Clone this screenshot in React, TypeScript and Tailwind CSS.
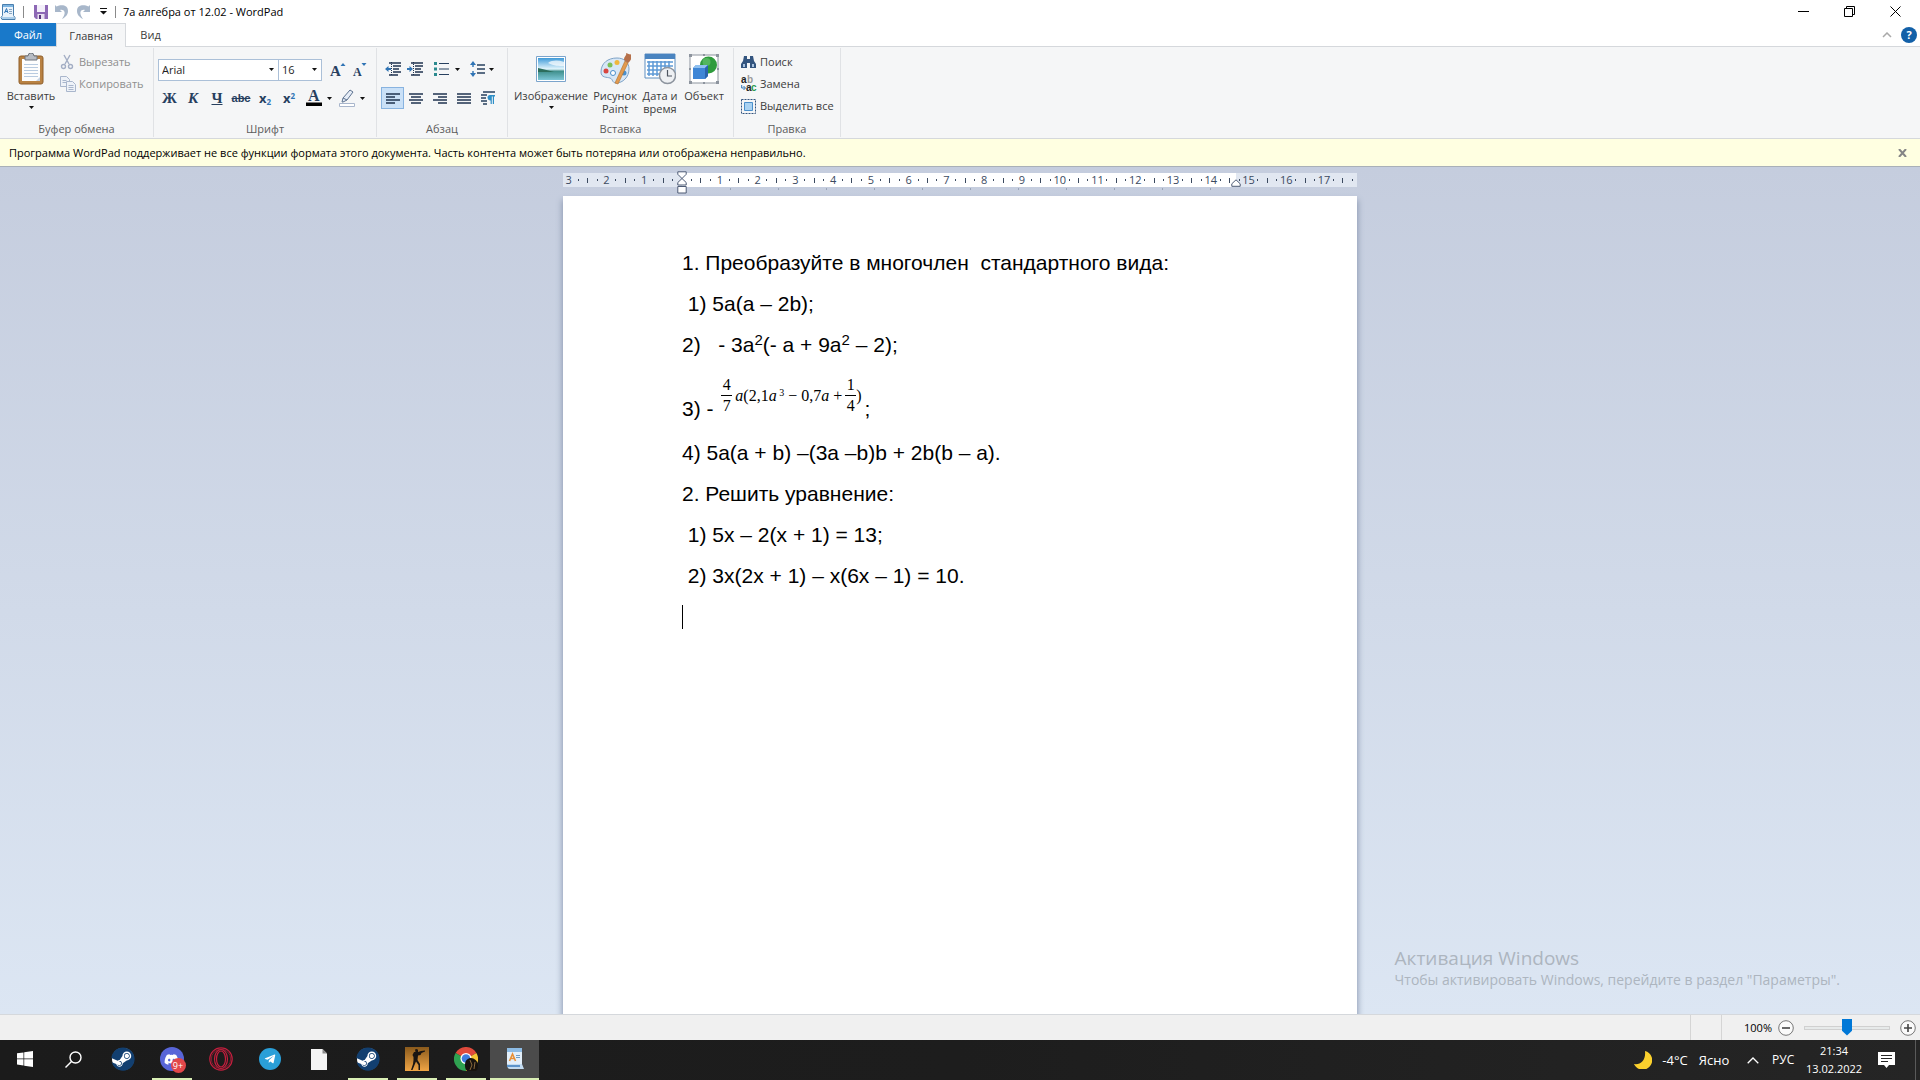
import type { ReactNode } from "react";
import { FaDiscord, FaSteam, FaTelegramPlane } from "react-icons/fa";

// WordPad window with the ribbon, ruler and document, above the Windows taskbar.

export default function App() {
  return (
    <div className="flex h-screen flex-col overflow-hidden bg-white font-['Open_Sans','Noto_Sans',sans-serif] text-[11px] leading-4 text-[#1e1e1e]">
      <TitleBar />
      <Tabs />
      <Ribbon />
      <Notice />
      <Workspace />
      <StatusBar />
      <Taskbar />
    </div>
  );
}

function TitleBar() {
  return (
    <header className="flex h-[23px] shrink-0 items-center justify-between pr-[2px]">
      <div className="flex h-full items-center">
        <svg viewBox="0 0 16 16" className="h-4 w-4">
          <path d="M2.500.5h11v11l1.500 2v2H2l-1-2 1.500-2z" fill="#eaf3fb" stroke="#4a7fae" />
          <path d="M3 1h10v2H3z" fill="#7db4e0" />
          <path d="M4.500 9L6.500 4.500 8 9M5 7.500h2.500" fill="none" stroke="#2f74b5" />
          <path d="M9 5.500h3M9 7.500h3M9 9.500h3" stroke="#8ba7c2" />
          <path d="M2 13h12v2H2z" fill="#a9cdea" />
        </svg>
        <span className="mr-[10px] ml-[7px] h-3 w-px bg-[#8a8a8a]" />
        <div className="flex items-center gap-[7px]">
          <button aria-label="Сохранить">
            <svg viewBox="0 0 14 14" className="h-[14px] w-[14px]">
              <path d="M0 0h14v14H2L0 12z" fill="#8d68b5" />
              <path d="M3 0h8v7H3z" fill="#f3effa" />
              <path d="M3.5 9h7v5h-7z" fill="#e8e0f0" />
              <path d="M5 10h2v4H5z" fill="#54357c" />
            </svg>
          </button>
          <button aria-label="Отменить">
            <UndoIcon />
          </button>
          <button aria-label="Вернуть" className="-scale-x-100">
            <UndoIcon />
          </button>
          <button aria-label="Настройка панели быстрого доступа" className="ml-[3px]">
            <svg viewBox="0 0 7 7" className="h-[7px] w-[7px]">
              <path d="M0 0h7v1H0zM0 3h7L3.500 6.500z" fill="#111" />
            </svg>
          </button>
        </div>
        <span className="mr-[7px] ml-2 h-3 w-px bg-[#8a8a8a]" />
        <h1 className="text-black">7а алгебра от 12.02 - WordPad</h1>
      </div>
      <div className="flex h-full items-center text-black">
        <button aria-label="Свернуть" className="flex w-[46px] justify-center">
          <svg viewBox="0 0 11 11" className="h-[11px] w-[11px]">
            <path d="M0 5.500h11" stroke="currentColor" />
          </svg>
        </button>
        <button aria-label="Свернуть в окно" className="flex w-[46px] justify-center">
          <svg viewBox="0 0 11 11" className="h-[11px] w-[11px]" fill="none" stroke="currentColor">
            <path d="M.5 2.500h8v8h-8zM2.500 2.500v-2h8v8h-2" />
          </svg>
        </button>
        <button aria-label="Закрыть" className="flex w-[46px] justify-center">
          <svg viewBox="0 0 11 11" className="h-[11px] w-[11px]" stroke="currentColor">
            <path d="M.5.5l10 10M10.500.5l-10 10" />
          </svg>
        </button>
      </div>
    </header>
  );
}

function Tabs() {
  return (
    <nav className="flex h-6 shrink-0 items-stretch border-b border-[#d5d8dc] text-[#3c3c3c]">
      <button className="w-14 bg-[#1979ca] text-white">Файл</button>
      <button className="-mb-px w-[70px] border-x border-t border-[#d5d8dc] bg-[#f5f6f7]">
        Главная
      </button>
      <button className="w-[49px]">Вид</button>
      <div className="ml-auto flex items-center gap-[9px] pr-[3px]">
        <button aria-label="Свернуть ленту">
          <svg viewBox="0 0 10 6" className="h-[6px] w-[10px]" fill="none" stroke="#a9a9a9" strokeWidth="1.500">
            <path d="M1 5l4-4 4 4" />
          </svg>
        </button>
        <button
          aria-label="Справка"
          className="flex h-4 w-4 items-center justify-center rounded-full bg-[#1260a8] font-bold text-white"
        >
          ?
        </button>
      </div>
    </nav>
  );
}

function Ribbon() {
  return (
    <section className="flex h-[91px] shrink-0 bg-[#f5f6f7]">
      <Group title="Буфер обмена" width="w-[154px]">
        <div className="flex pl-1">
          <BigButton label="Вставить" width="w-[54px]" menu>
            <PasteIcon />
          </BigButton>
          <div className="flex flex-col gap-[6px] pt-[6px] pl-[2px] text-[#8f8f8f]">
            <button className="flex items-center gap-[5px]">
              <svg viewBox="0 0 14 16" className="h-4 w-[14px]" fill="none" stroke="#a3aec4" strokeWidth="1.400">
                <path d="M4 1l5 9M10 1L5 10" />
                <circle cx="3.500" cy="12.500" r="2" />
                <circle cx="10.500" cy="12.500" r="2" />
              </svg>
              Вырезать
            </button>
            <button className="flex items-center gap-[3px]">
              <svg viewBox="0 0 16 16" className="h-4 w-4" fill="#eef2f8" stroke="#a9b6cc">
                <path d="M.5.5h6l3 3v7h-9zM2.500 4.500h4M2.500 6.500h4" />
                <path d="M6.500 5.500h6l3 3v7h-9zM8.500 9.500h5M8.500 11.500h5M8.500 13.500h5" />
              </svg>
              Копировать
            </button>
          </div>
        </div>
      </Group>
      <Group title="Шрифт" width="w-[223px]">
        <div className="flex flex-col gap-[6px] pt-[11px] pl-1">
          <div className="flex items-center">
            <Combo label="Семейство шрифтов" value="Arial" width="w-[121px]" />
            <Combo label="Размер шрифта" value="16" width="-ml-px w-[44px]" />
            <button aria-label="Увеличить размер" className="ml-2 flex w-[22px]">
              <svg viewBox="0 0 16 16" className="h-4 w-4 overflow-visible" fill="#27405f">
                <text x="0" y="14" fontSize="15" fontWeight="700" fontFamily="Liberation Serif">A</text>
                <path d="M10.500 4l2.500-3 2.500 3z" fill="#2f74b5" />
              </svg>
            </button>
            <button aria-label="Уменьшить размер" className="flex">
              <svg viewBox="0 0 16 16" className="h-4 w-4 overflow-visible" fill="#27405f">
                <text x="1" y="14" fontSize="12" fontWeight="700" fontFamily="Liberation Serif">A</text>
                <path d="M9.500 1l2.500 3 2.500-3z" fill="#2f74b5" />
              </svg>
            </button>
          </div>
          <div className="flex h-[22px] items-center font-['Liberation_Serif',serif] text-[15px] font-bold text-[#27405f]">
            <button className="w-[23px]">Ж</button>
            <button className="w-6 italic">К</button>
            <button className="w-6 underline">Ч</button>
            <button className="w-6 font-['Liberation_Sans',sans-serif] text-[11px] line-through">abc</button>
            <button className="w-6 font-['Open_Sans',sans-serif] text-[13px]">
              x<sub className="text-[8px] text-[#2f74b5]">2</sub>
            </button>
            <button className="w-6 font-['Open_Sans',sans-serif] text-[13px]">
              x<sup className="text-[8px] text-[#2f74b5]">2</sup>
            </button>
            <button aria-label="Цвет текста" className="ml-[5px] flex w-8 items-center gap-[5px]">
              <svg viewBox="0 0 16 18" className="h-[18px] w-4 overflow-visible" fill="#27405f">
                <text x="2" y="12" fontSize="16" fontWeight="700" fontFamily="Liberation Serif">A</text>
                <path d="M0 13.500h16V17H0z" fill="#000" />
              </svg>
              <Arrow />
            </button>
            <button aria-label="Цвет выделения текста" className="ml-px flex items-center gap-[5px]">
              <svg viewBox="0 0 16 18" className="h-[18px] w-4">
                <path d="M.5 14.500h15v3H.5z" fill="#fff" stroke="#a9b6cc" />
                <path d="M3 13l1-4 7-8 3 2-6 8-4 2z" fill="#e6edf7" stroke="#5d7290" />
                <path d="M4 9l4 2" stroke="#5d7290" />
              </svg>
              <Arrow />
            </button>
          </div>
        </div>
      </Group>
      <Group title="Абзац" width="w-[131px]">
        <div className="flex flex-col gap-[8px] pt-[11px] pl-1">
          <div className="flex h-5 items-center pl-1">
            <button aria-label="Уменьшить отступ" className="w-[22px]">
              <IndentIcon flip />
            </button>
            <button aria-label="Увеличить отступ" className="w-[27px]">
              <IndentIcon />
            </button>
            <button aria-label="Начать список" className="flex w-9 items-center gap-[6px]">
              <svg viewBox="0 0 15 14" className="h-[14px] w-[15px]">
                <path d="M0 0h3v3H0zM0 5.500h3v3H0zM0 11h3v3H0z" fill="#2b8a8f" />
                <path d="M5 1.500h10M5 7h10M5 12.500h10" stroke="#27405f" />
              </svg>
              <Arrow />
            </button>
            <button aria-label="Междустрочный интервал" className="flex items-center gap-[3px]">
              <svg viewBox="0 0 16 16" className="h-4 w-4">
                <path d="M3 0l3 4H0zM3 16l3-4H0zM2.300 4h1.400v2H2.300zM2.300 10h1.400v2H2.300z" fill="#2f74b5" />
                <path d="M7 4h8M7 8h8M7 12h8" stroke="#27405f" strokeWidth="1.300" />
              </svg>
              <Arrow />
            </button>
          </div>
          <div className="flex items-center">
            <button aria-label="По левому краю" className="flex h-[22px] w-[23px] items-center justify-center border border-[#88b3e0] bg-[#c9e0f7]">
              <LinesIcon d="M0 1h14M0 4h9M0 7h14M0 10h9" />
            </button>
            <button aria-label="По центру" className="flex w-6 justify-center">
              <LinesIcon d="M0 1h14M2 4h10M0 7h14M2 10h10" />
            </button>
            <button aria-label="По правому краю" className="flex w-6 justify-center">
              <LinesIcon d="M0 1h14M5 4h9M0 7h14M5 10h9" />
            </button>
            <button aria-label="По ширине" className="flex w-6 justify-center">
              <LinesIcon d="M0 1h14M0 4h14M0 7h14M0 10h14" />
            </button>
            <button aria-label="Абзац" className="flex w-6 justify-center">
              <svg viewBox="0 0 14 14" className="h-[14px] w-[14px]">
                <path d="M2 1h12M0 4h6M0 7h5M0 10h6M2 13h4" stroke="#27405f" strokeWidth="1.400" />
                <path d="M9 4h5v1.500h-1V13h-1.200V5.500h-1V13H9.600V9.500A2.700 2.700 0 019 4z" fill="#2f8fc7" />
              </svg>
            </button>
          </div>
        </div>
      </Group>
      <Group title="Вставка" width="w-[226px]">
        <div className="flex pl-[3px]">
          <BigButton label="Изображение" width="w-20" menu>
            <ImageIcon />
          </BigButton>
          <BigButton label="Рисунок Paint" width="w-12">
            <PaletteIcon />
          </BigButton>
          <BigButton label="Дата и время" width="w-[42px]">
            <CalendarIcon />
          </BigButton>
          <BigButton label="Объект" width="w-[46px]">
            <ObjectIcon />
          </BigButton>
        </div>
      </Group>
      <Group title="Правка" width="w-[107px]">
        <div className="flex flex-col gap-[6px] pt-[6px] pl-[7px] text-[#3c3c3c]">
          <button className="flex items-center gap-1">
            <svg viewBox="0 0 15 14" className="h-[14px] w-[15px]">
              <path d="M3 1h3v3h3V1h3l1 5 2 3v4H9V8H6v5H0V9l2-3z" fill="#33557f" />
              <path d="M2 9h2v3H2zM11 9h2v3h-2z" fill="#a9c3e0" />
            </svg>
            Поиск
          </button>
          <button className="flex items-center gap-1">
            <svg viewBox="0 0 15 16" className="h-4 w-[15px] overflow-visible" fontFamily="Liberation Sans" fontSize="10" fontWeight="700">
              <text x="0" y="7" fill="#222">a</text>
              <text x="6" y="7" fill="#9a9a9a">b</text>
              <text x="5" y="15" fill="#222">a</text>
              <text x="10" y="15" fill="#2a9a50">c</text>
              <path d="M.7 9v3h3M2.500 10l2 2-2 2" stroke="#2f74b5" fill="none" />
            </svg>
            Замена
          </button>
          <button className="flex items-center gap-1">
            <svg viewBox="0 0 15 15" className="h-[15px] w-[15px]">
              <path d="M.5.5h14v14H.5z" fill="none" stroke="#33557f" strokeDasharray="2 1" />
              <path d="M3.500 3.500h8v8h-8z" fill="#a9d2f2" stroke="#4a8fcb" />
            </svg>
            Выделить все
          </button>
        </div>
      </Group>
    </section>
  );
}

interface GroupProps {
  title: string;
  width: string;
  children: ReactNode;
}

function Group({ title, width, children }: GroupProps) {
  return (
    <div className={`my-px flex shrink-0 flex-col border-r border-[#e0e2e5] ${width}`}>
      <div className="grow">{children}</div>
      <p className="text-center text-[#5c5c5c]">{title}</p>
    </div>
  );
}

interface BigButtonProps {
  label: string;
  width: string;
  menu?: boolean;
  children: ReactNode;
}

function BigButton({ label, width, menu, children }: BigButtonProps) {
  return (
    <button className={`flex flex-col items-center pt-[5px] leading-[13px] text-[#3c3c3c] ${width}`}>
      {children}
      <span className="mt-1">{label}</span>
      {menu && (
        <span className="mt-1">
          <Arrow />
        </span>
      )}
    </button>
  );
}

interface ComboProps {
  label: string;
  value: string;
  width: string;
}

function Combo({ label, value, width }: ComboProps) {
  return (
    <div className={`relative h-[22px] border border-[#abc0d8] bg-white ${width}`}>
      <select aria-label={label} className="h-full w-full appearance-none pl-[3px] text-[#1e1e1e]">
        <option>{value}</option>
      </select>
      <span className="pointer-events-none absolute top-2 right-1">
        <Arrow />
      </span>
    </div>
  );
}

function Arrow() {
  return (
    <svg viewBox="0 0 5 3" className="h-[3px] w-[5px]">
      <path d="M0 0h5L2.500 3z" fill="#111" />
    </svg>
  );
}

function UndoIcon() {
  return (
    <svg viewBox="0 0 14 14" className="h-[14px] w-[14px]">
      <path d="M0 0l1.500 1.500C6-.5 13-.5 13 6c0 4-3 6.500-6 8 2-3 3-5 2.500-7C9 5 7 4.500 5 5l2 2H0z" fill="#a8b7ca" />
    </svg>
  );
}

function LinesIcon({ d }: { d: string }) {
  return (
    <svg viewBox="0 0 14 11" className="h-[11px] w-[14px]">
      <path d={d} stroke="#1f3350" strokeWidth="1.400" />
    </svg>
  );
}

function IndentIcon({ flip }: { flip?: boolean }) {
  return (
    <svg viewBox="0 0 16 14" className="h-[14px] w-4">
      <path d="M4 1h12M8 4h8M8 7h6M8 10h8M4 13h9" stroke="#1f3350" strokeWidth="1.400" />
      <path d="M6.500 0v14" stroke="#1f3350" strokeDasharray="1 1" />
      {flip ? (
        <path d="M0 7l3.500-3v2H6v2H3.500v2z" fill="#2f74b5" />
      ) : (
        <path d="M6 7L2.500 4v2H0v2h2.500v2z" fill="#2f74b5" />
      )}
    </svg>
  );
}

function PasteIcon() {
  return (
    <svg viewBox="0 0 26 32" className="h-8 w-[26px]">
      <rect x="1" y="3" width="24" height="28" rx="2" fill="#b98243" stroke="#8f5f2b" />
      <path d="M4 6h18v22H4z" fill="#fdfdfd" />
      <path d="M6 11.500h14M6 14.500h14M6 17.500h14M6 20.500h14M6 23.500h14" stroke="#b9cbe0" />
      <path d="M7 3h3a3 3 0 016 0h3v4H7z" fill="#b7bcc4" stroke="#6e757f" />
      <path d="M18 28l4-4v4z" fill="#c5d2e2" />
    </svg>
  );
}

function ImageIcon() {
  return (
    <svg viewBox="0 0 32 32" className="h-8 w-8">
      <defs>
        <linearGradient id="sky" x2="0" y2="1">
          <stop offset="0" stopColor="#3f9ad8" />
          <stop offset=".5" stopColor="#e2f5fc" />
          <stop offset=".6" stopColor="#3f8f8c" />
          <stop offset="1" stopColor="#7cc6d6" />
        </linearGradient>
      </defs>
      <path d="M1.500 3.500h29v25h-29z" fill="#fff" stroke="#7ba4cc" />
      <path d="M3 5h26v22H3z" fill="url(#sky)" />
      <path d="M3 15c6 1 11 3 16 4H3z" fill="#2c6d5c" />
      <path d="M13 10c4-3 10-3 16-1v4c-5 0-10 0-16-3z" fill="#fff" opacity=".7" />
    </svg>
  );
}

function PaletteIcon() {
  return (
    <svg viewBox="0 0 32 32" className="h-8 w-8">
      <path
        d="M2 19C2 10 9 5 18 5c7 0 12 4 12 11 0 8-6 14-13 14-4 0-3-4-6-5s-9 0-9-6z"
        fill="#d7e7f6"
        stroke="#7fa3c7"
      />
      <circle cx="7" cy="18" r="2.500" fill="#d8453f" />
      <circle cx="11" cy="12" r="2.500" fill="#7cc05a" />
      <circle cx="18" cy="9.500" r="2.500" fill="#efb73e" />
      <circle cx="14" cy="20" r="2.500" fill="#fff" stroke="#4a8fcb" />
      <circle cx="25" cy="20" r="2.500" fill="#4a8fcb" />
      <path d="M26 8l3 2-10 21-3-1z" fill="#e29a4f" stroke="#b0702c" strokeWidth=".6" />
      <path d="M25 7c0-4 3-4 2-7 3 1 4 2 6 1 0 3-1 7-4 9z" fill="#b5704a" />
    </svg>
  );
}

function CalendarIcon() {
  return (
    <svg viewBox="0 0 32 32" className="h-8 w-8">
      <path d="M1 1h30v24H1z" fill="#fff" stroke="#5f8fc0" />
      <path d="M1 1h30v5H1z" fill="#4a84c0" />
      <path d="M3 9h26M3 13h26M3 17h26M3 21h26M5 8v15M9 8v15M13 8v15M17 8v15M21 8v15M25 8v15" stroke="#5e9ad6" strokeWidth="1.500" />
      <circle cx="23.500" cy="22.500" r="8" fill="#eef0f3" stroke="#8d949e" strokeWidth="1.500" />
      <path d="M23.500 17v6h4.500" fill="none" stroke="#4d5560" strokeWidth="1.200" />
    </svg>
  );
}

function ObjectIcon() {
  return (
    <svg viewBox="0 0 32 32" className="h-8 w-8">
      <path d="M2 2h28v28H2z" fill="#fff" stroke="#8d949e" />
      <path d="M1 1h3v3H1zM28 1h3v3h-3zM1 28h3v3H1zM28 28h3v3h-3zM15 1h2v2h-2zM15 29h2v2h-2zM1 15h2v2H1zM29 15h2v2h-2z" fill="#8d949e" />
      <circle cx="20.500" cy="12" r="8.500" fill="#2e9b3c" />
      <circle cx="18.500" cy="9" r="4" fill="#6cc873" opacity=".6" />
      <path d="M5 15l3-3h12v11l-3 3H5z" fill="#3f86d6" />
      <path d="M5 15l3-3h12l-3 3z" fill="#8fc0f0" />
      <path d="M17 15l3-3v11l-3 3z" fill="#2a64ad" />
    </svg>
  );
}

function Notice() {
  return (
    <div className="flex h-[29px] shrink-0 items-center justify-between border-y border-t-[#d5d8dc] border-b-[#a9b0b8] bg-[#ffffe1] pr-[13px] pl-[9px] text-black">
      <p>
        Программа WordPad поддерживает не все функции формата этого документа. Часть контента может быть
        потеряна или отображена неправильно.
      </p>
      <button aria-label="Закрыть сообщение">
        <svg viewBox="0 0 9 8" className="h-2 w-[9px]">
          <path d="M1 0l7 8M8 0L1 8" stroke="#858585" strokeWidth="2" />
        </svg>
      </button>
    </div>
  );
}

const RULER = ["3", "2", "1", "", ...Array.from({ length: 17 }, (_, i) => String(i + 1))];
const TAB_STOPS = Array.from({ length: 11 }, (_, i) => i);

function Ruler() {
  return (
    <div className="relative w-[794px] pt-[6px]">
      <div className="flex h-[14px] bg-[linear-gradient(to_right,#e1e7f1_119px,#fff_119px,#fff_673px,#e1e7f1_673px)] pl-px text-[11px] text-[#3b4a5f]">
        {RULER.map((mark, i) => (
          <div key={i} className="grid flex-1 basis-0 grid-cols-4 items-center justify-items-center">
            <span className="flex w-0 justify-center leading-[14px]">{mark}</span>
            <span className="h-[2px] w-px bg-[#3b4a5f]" />
            <span className="h-[5px] w-px bg-[#3b4a5f]" />
            <span className="h-[2px] w-px bg-[#3b4a5f]" />
          </div>
        ))}
      </div>
      <div className="flex h-[9px] pt-px pl-[120px]">
        {TAB_STOPS.map((stop) => (
          <span key={stop} className="h-[2px] w-12 border-r border-[#9aa5b8]" />
        ))}
      </div>
      <svg viewBox="0 0 10 23" className="absolute top-1 left-[114px] h-[23px] w-[10px]" fill="#fff" stroke="#4d5b75">
        <path d="M.8.800h8.400v2.500L5 7.500.8 3.300zM5 7.500l4.200 4V14H.8v-2.500zM.8 15.500h8.400v6.500H.8z" />
      </svg>
      <svg viewBox="0 0 10 8" className="absolute top-3 left-[668px] h-2 w-[10px]" fill="#fff" stroke="#4d5b75">
        <path d="M5 .8l4.200 4v2.500H.8V4.800z" />
      </svg>
    </div>
  );
}

function Fraction({ top, bottom }: { top: string; bottom: string }) {
  return (
    <span className="flex w-[11px] flex-col items-center leading-5">
      <span>{top}</span>
      <span className="h-px w-full bg-black" />
      <span>{bottom}</span>
    </span>
  );
}

function Workspace() {
  return (
    <main className="relative flex grow flex-col items-center overflow-hidden bg-linear-to-b from-[#c5cdde] to-[#dce6f3]">
      <Ruler />
      <article className="w-[794px] grow bg-white pt-[46px] pl-[119px] font-['Liberation_Sans',Arial,sans-serif] text-[21px] leading-[41px] whitespace-pre text-black shadow-[0_5px_6px_1px_#8f9bb3]">
        <p>1. Преобразуйте в многочлен  стандартного вида:</p>
        <p> 1) 5a(a – 2b);</p>
        <p>
          2)   - 3a<sup className="text-[15px] leading-none">2</sup>(- a + 9a
          <sup className="text-[15px] leading-none">2</sup> – 2);
        </p>
        <div className="flex h-[67px] items-end pb-[3px]">
          <p>3) - </p>
          <div className="mb-[13px] ml-[2px] flex items-center gap-[3px] font-['Liberation_Serif',serif] text-[16px] leading-5">
            <Fraction top="4" bottom="7" />
            <span>
              <i>a</i>(2,1<i>a</i>
              <sup className="text-[10px] leading-none"> 3</sup> − 0,7<i>a</i> +
            </span>
            <span className="flex items-center">
              <Fraction top="1" bottom="4" />)
            </span>
          </div>
          <p className="pl-[3px]">;</p>
        </div>
        <p>4) 5a(a + b) –(3a –b)b + 2b(b – a).</p>
        <p>2. Решить уравнение:</p>
        <p> 1) 5x – 2(x + 1) = 13;</p>
        <p> 2) 3x(2x + 1) – x(6x – 1) = 10.</p>
        <div className="mt-[9px] h-6 w-px bg-black" />
      </article>
      {/* Activation watermark */}
      <div className="absolute right-20 bottom-6 text-[#adb5bf]">
        <p className="text-[19px] leading-6">Активация Windows</p>
        <p className="text-[14px] leading-5">Чтобы активировать Windows, перейдите в раздел "Параметры".</p>
      </div>
    </main>
  );
}

function StatusBar() {
  return (
    <footer className="flex h-[26px] shrink-0 items-center justify-end border-t border-[#d5d8dc] bg-[#f0f0f0] pr-1">
      <span className="h-full w-8 border-x border-[#d5d5d5]" />
      <label htmlFor="zoom" className="w-[50px] text-right text-black">
        100%
      </label>
      <button aria-label="Уменьшить" className="ml-[6px]">
        <ZoomSign d="M4 8h8" />
      </button>
      <input
        id="zoom"
        type="range"
        defaultValue={50}
        className="mx-[10px] h-[18px] w-[86px] appearance-none bg-transparent [&::-webkit-slider-runnable-track]:h-[4px] [&::-webkit-slider-runnable-track]:border [&::-webkit-slider-runnable-track]:border-[#d0d0d0] [&::-webkit-slider-runnable-track]:bg-[#e7eaea] [&::-webkit-slider-thumb]:-mt-2 [&::-webkit-slider-thumb]:h-[17px] [&::-webkit-slider-thumb]:w-[10px] [&::-webkit-slider-thumb]:appearance-none [&::-webkit-slider-thumb]:bg-[#0078d7] [&::-webkit-slider-thumb]:[clip-path:polygon(0_0,100%_0,100%_72%,50%_100%,0_72%)]"
      />
      <button aria-label="Увеличить">
        <ZoomSign d="M4 8h8M8 4v8" />
      </button>
    </footer>
  );
}

function ZoomSign({ d }: { d: string }) {
  return (
    <svg viewBox="0 0 16 16" className="h-4 w-4">
      <circle cx="8" cy="8" r="7.300" fill="#fafafa" stroke="#777" />
      <path d={d} stroke="#444" strokeWidth="1.600" />
    </svg>
  );
}

function SteamIcon() {
  return (
    <span className="flex h-[22px] w-[22px] items-center justify-center rounded-full bg-white">
      <FaSteam className="h-6 w-6 shrink-0 text-[#123f70]" />
    </span>
  );
}

interface TaskProps {
  label: string;
  running?: boolean;
  active?: boolean;
  children: ReactNode;
}

function Task({ label, running, active, children }: TaskProps) {
  return (
    <button
      aria-label={label}
      className={`flex w-[49px] flex-col items-center ${active ? "bg-[#4b4b4b]" : ""}`}
    >
      <span className="flex grow items-center">{children}</span>
      <span className={`h-[2px] ${active ? "w-full" : "w-10"} ${running || active ? "bg-[#d9efb5]" : ""}`} />
    </button>
  );
}

function Taskbar() {
  return (
    <footer className="flex h-10 shrink-0 justify-between bg-linear-to-r from-[#1b1b1b] via-[#1d1d1d] to-[#252525] text-white">
      <div className="flex">
        <Task label="Пуск">
          <svg viewBox="0 0 16 16" className="h-4 w-4" fill="#fff">
            <path d="M0 2.300l6.500-.9v6.200H0zM7.200 1.300L16 0v7.600H7.200zM0 8.300h6.500v6.200L0 13.600zM7.200 8.300H16V16l-8.800-1.300z" />
          </svg>
        </Task>
        <Task label="Поиск">
          <svg viewBox="0 0 17 17" className="h-[17px] w-[17px]" fill="none" stroke="#fff" strokeWidth="1.400">
            <circle cx="10.500" cy="6.500" r="5.500" />
            <path d="M6.500 10.500L.5 16.500" />
          </svg>
        </Task>
        <Task label="Steam">
          <SteamIcon />
        </Task>
        <Task label="Discord" running>
          <span className="relative flex h-6 w-6 items-center justify-center rounded-full bg-[#5865d8]">
            <FaDiscord className="h-[15px] w-[15px]" />
            <span className="absolute -right-[2px] -bottom-[2px] h-[15px] w-[15px] rounded-full bg-[#e2474a] text-[9px] leading-[15px]">
              9+
            </span>
          </span>
        </Task>
        <Task label="Opera">
          <svg viewBox="0 0 24 24" className="h-6 w-6" fill="none" stroke="#c41f3e" strokeWidth="1.200">
            <circle cx="12" cy="12" r="11.200" />
            <circle cx="12" cy="12" r="9.700" strokeWidth=".6" />
            <ellipse cx="12" cy="12" rx="6.500" ry="9.500" />
            <ellipse cx="12" cy="12" rx="4.500" ry="8" />
          </svg>
        </Task>
        <Task label="Telegram">
          <span className="flex h-[22px] w-[22px] items-center justify-center rounded-full bg-[#2a9fd8]">
            <FaTelegramPlane className="h-3 w-3" />
          </span>
        </Task>
        <Task label="Документ">
          <svg viewBox="0 0 16 21" className="h-[21px] w-4">
            <path d="M0 0h11.500L16 4.500V21H0z" fill="#f4f4f4" />
            <path d="M11.500 0v4.500H16z" fill="#8a8a8a" />
          </svg>
        </Task>
        <Task label="Steam" running>
          <SteamIcon />
        </Task>
        <Task label="Counter-Strike" running>
          <svg viewBox="0 0 24 24" className="h-6 w-6">
            <defs>
              <linearGradient id="sand" x2="0" y2="1">
                <stop offset="0" stopColor="#8a5a1c" />
                <stop offset="1" stopColor="#f0a545" />
              </linearGradient>
            </defs>
            <path d="M0 0h24v24H0z" fill="url(#sand)" />
            <path
              d="M10 2.500l2-.5 1 1v2l3-1 4-.5v1L16.500 6l-1 2-2.500.5-.5 4.500 2.500 4v6h-1.500v-5L11 14.500 9.500 18 7.500 23H6l2-6 .5-4V10L7.500 8 9 5h1.500z"
              fill="#191512"
            />
          </svg>
        </Task>
        <Task label="Chrome" running>
          <svg viewBox="0 0 24 24" className="h-6 w-6">
            <path d="M12 12L1.600 6A12 12 0 0122.400 6z" fill="#e04a3c" />
            <path d="M12 12l10.400-6A12 12 0 0112 24z" fill="#f5c534" />
            <path d="M12 12v12A12 12 0 011.600 6z" fill="#2fa251" />
            <circle cx="12" cy="11.500" r="5.500" fill="#fff" />
            <circle cx="12" cy="11.500" r="4.300" fill="#3f7de0" />
            <path d="M11 18c0-5 3-7 6-7s7 3 7 7-1 6-3 6h-8c-2-2-2-4-2-6z" fill="#17130f" />
            <path d="M16 13l2 5-2 5M21 15l-1 7" stroke="#8a6a3c" fill="none" />
          </svg>
        </Task>
        <Task label="WordPad" active>
          <svg viewBox="0 0 18 22" className="h-[22px] w-[18px]">
            <path d="M1 0h15v16H1z" fill="#e3effa" />
            <path d="M1 0h15v4H1z" fill="#8dbbe4" />
            <path d="M1 16h15l2 5H4c-2 0-3-2-3-5z" fill="#c3dbf0" />
            <path d="M1 17h13v2H1z" fill="#5c93c9" />
            <path d="M3.500 13L6.500 6l3 7M4.500 10.500h4" fill="none" stroke="#e88f35" strokeWidth="1.600" />
            <path d="M10 7.500h4M10 9.500h4" stroke="#6f9cc4" />
          </svg>
        </Task>
      </div>
      <div className="flex items-center">
        <button className="flex items-center gap-[10px] text-[13px]">
          <svg viewBox="0 0 18 18" className="h-[18px] w-[18px]">
            <path d="M11 0a9.500 9.500 0 11-11 13C7 14 12 9 11 0z" fill="#fbd02d" />
          </svg>
          <span className="w-[26px]">-4°C</span>
          <span className="w-8">Ясно</span>
        </button>
        <button aria-label="Скрытые значки" className="mr-[13px] ml-[17px]">
          <svg viewBox="0 0 12 7" className="h-[7px] w-3" fill="none" stroke="#fff" strokeWidth="1.300">
            <path d="M.7 6.300L6 1l5.300 5.300" />
          </svg>
        </button>
        <button className="w-[22px] text-[12px]">РУС</button>
        <time className="ml-3 w-[56px] text-center leading-[18px]">
          21:34
          <br />
          13.02.2022
        </time>
        <button aria-label="Уведомления" className="mr-5 ml-4">
          <svg viewBox="0 0 17 16" className="h-4 w-[17px]">
            <path d="M0 0h17v13h-6l-2.500 3L6 13H0z" fill="#fff" />
            <path d="M3 3.500h11M3 6.500h11M3 9.500h7" stroke="#252525" strokeWidth="1.200" />
          </svg>
        </button>
        <span className="h-full w-[5px] border-l border-[#5a5a5a]" />
      </div>
    </footer>
  );
}
